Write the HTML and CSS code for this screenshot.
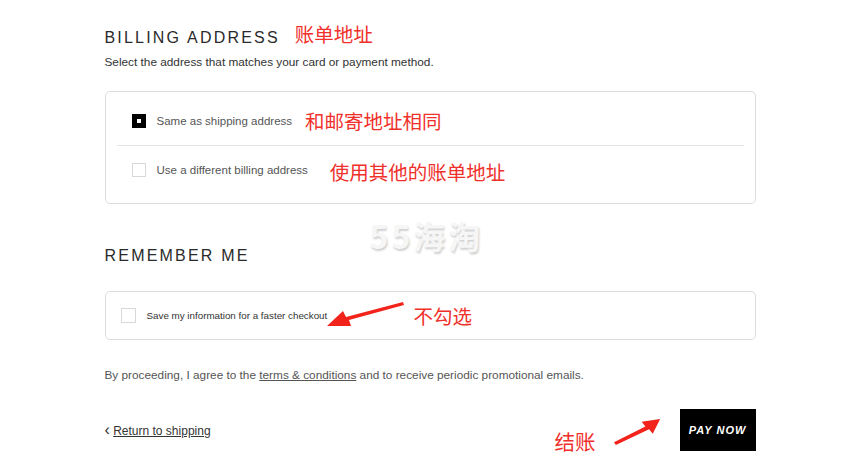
FILE: index.html
```html
<!DOCTYPE html>
<html lang="en">
<head>
    <meta charset="UTF-8">
    <meta name="viewport" content="width=device-width, initial-scale=1.0">
    <title>Checkout - Billing</title>
    <link rel="stylesheet" href="styles.css">
</head>
<body>
    <div class="page">
        <!-- Billing address -->
        <section class="section">
            <h2 class="title">BILLING ADDRESS<span class="note note-title">账单地址</span></h2>
            <p class="sub">Select the address that matches your card or payment method.</p>

            <div class="box">
                <div class="option option-first">
                    <span class="check checked"></span>
                    <span class="label">Same as shipping address</span>
                    <span class="note note-one">和邮寄地址相同</span>
                </div>
                <div class="divider"></div>
                <div class="option option-last">
                    <span class="check"></span>
                    <span class="label">Use a different billing address</span>
                    <span class="note note-two">使用其他的账单地址</span>
                </div>
            </div>
        </section>

        <div class="watermark">55海淘</div>

        <!-- Remember me -->
        <section class="section remember">
            <h2 class="title">REMEMBER ME</h2>
            <div class="box box-small">
                <div class="option-small">
                    <span class="check"></span>
                    <span class="label label-small">Save my information for a faster checkout</span>
                </div>
                <svg class="arrow arrow-left" width="80" height="30" viewBox="0 0 80 30">
                    <polygon points="78,2 79,5 24,20 26,26 2,26 18,11 21,17" fill="#f2231b"/>
                </svg>
                <span class="note note-skip">不勾选</span>
            </div>
        </section>

        <p class="legal">By proceeding, I agree to the <a href="#">terms &amp; conditions</a> and to receive periodic promotional emails.</p>

        <div class="actions">
            <a class="back" href="#"><span class="chev">&lsaquo;</span> <span class="back-text">Return to shipping</span></a>
            <div class="pay-wrap">
                <span class="note note-pay">结账</span>
                <svg class="arrow-up" width="48" height="32" viewBox="0 0 52 32">
                    <polygon points="2,30 0,27 34,10 30,5 50,2 42,18 38,13" fill="#f2231b"/>
                </svg>
                <button class="pay">PAY NOW</button>
            </div>
        </div>
    </div>
</body>
</html>
```

FILE: styles.css
```css
body {
    margin: 0;
    padding: 0;
    background-color: #fff;
    font-family: 'Liberation Sans', Arial, sans-serif;
    color: #333;
}

.page {
    width: 651px;
    margin: 0 auto;
    padding-top: 24px;
    position: relative;
}

.title {
    margin: 0;
    font-size: 16px;
    font-weight: normal;
    letter-spacing: 2.2px;
    color: #2a2a2a;
    line-height: 22px;
}

.note {
    font-family: 'Noto Sans CJK SC', sans-serif;
    color: #f0302b;
    letter-spacing: 0;
    font-weight: normal;
}

.note-title {
    font-size: 19.5px;
    margin-left: 15px;
    position: relative;
    top: -1px;
}

.sub {
    margin: 6px 0 0;
    font-size: 11.8px;
    color: #333;
}

.box {
    margin-top: 22px;
    border: 1px solid #dcdcdc;
    border-radius: 5px;
    padding: 0 11px;
}

.option {
    display: flex;
    align-items: center;
    padding-left: 15px;
    box-sizing: border-box;
}

.option-first {
    height: 53px;
    padding-top: 4px;
}

.option-last {
    height: 57px;
    padding-bottom: 10px;
}

.divider {
    height: 1px;
    background: #e4e4e4;
}

.check {
    width: 14px;
    height: 14px;
    border: 1px solid #d8d8d8;
    box-sizing: border-box;
    flex-shrink: 0;
    position: relative;
}

.checked {
    background: #000;
    border-color: #000;
}

.checked::after {
    content: "";
    position: absolute;
    width: 4px;
    height: 4px;
    background: #fff;
    left: 4px;
    top: 4px;
}

.label {
    font-size: 11.5px;
    color: #555;
    margin-left: 11px;
}

.note-one {
    font-size: 19.5px;
    margin-left: 13px;
    position: relative;
    top: 0;
}

.note-two {
    font-size: 19.5px;
    margin-left: 22px;
    position: relative;
    top: 2px;
}

.watermark {
    position: absolute;
    left: 265px;
    top: 212px;
    font-family: 'Noto Sans CJK SC', sans-serif;
    font-size: 32px;
    font-weight: bold;
    color: #f6f6f6;
    text-shadow: 1px 2px 2px #d0d0d0;
    letter-spacing: 3px;
}

.remember {
    margin-top: 41px;
}

.box-small {
    margin-top: 24px;
    height: 47px;
    display: flex;
    align-items: center;
    padding: 0 15px;
    position: relative;
}

.option-small {
    display: flex;
    align-items: center;
}

.box-small .check {
    width: 15px;
    height: 15px;
}

.label-small {
    font-size: 9.8px;
    color: #333;
    margin-left: 11px;
}

.arrow {
    position: absolute;
}

.arrow-left {
    left: 219px;
    top: 8px;
}

.note-skip {
    position: absolute;
    left: 308px;
    top: 9px;
    font-size: 19.5px;
}

.legal {
    margin: 28px 0 0;
    font-size: 11.8px;
    color: #555;
}

.legal a {
    color: #555;
    text-decoration: underline;
}

.actions {
    margin-top: 22px;
    display: flex;
    justify-content: space-between;
    align-items: center;
}

.back {
    color: #333;
    font-size: 12px;
    text-decoration: none;
}

.chev {
    font-size: 16px;
}

.back-text {
    text-decoration: underline;
}

.pay-wrap {
    display: flex;
    align-items: center;
}

.note-pay {
    font-size: 20.5px;
    margin-top: 22px;
}

.arrow-up {
    margin: 4px 18px 0 18px;
}

.pay {
    width: 76px;
    height: 42px;
    border: none;
    background: #000;
    color: #fff;
    font-family: 'Liberation Sans', Arial, sans-serif;
    font-size: 11px;
    font-weight: bold;
    font-style: italic;
    letter-spacing: 1px;
    cursor: pointer;
}
```
